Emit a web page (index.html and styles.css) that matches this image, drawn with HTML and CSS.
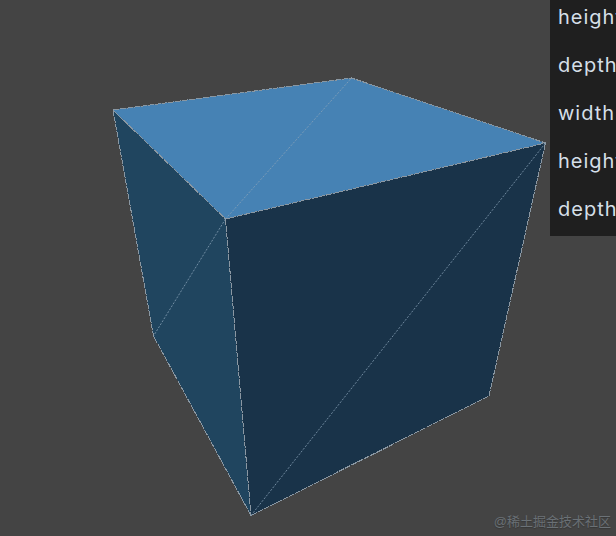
FILE: index.html
```html
<!DOCTYPE html>
<html lang="zh">
<head>
<meta charset="utf-8">
<title>Cube</title>
<link rel="stylesheet" href="styles.css">
</head>
<body>
<svg class="scene" width="616" height="536" viewBox="0 0 616 536">
  <polygon class="face-top" points="113,110 351.5,78 545.5,143 225.5,219"/>
  <polygon class="face-left" points="113,110 225.5,219 251,515.5 153.5,336"/>
  <polygon class="face-right" points="225.5,219 545.5,143 489,396 251,515.5"/>
  <g class="edges">
    <polyline points="113,110 351.5,78 545.5,143 225.5,219 113,110 153.5,336 251,515.5 489,396 545.5,143"/>
    <line x1="225.5" y1="219" x2="251" y2="515.5"/>
  </g>
  <g class="edges-thin">
    <line x1="225.5" y1="219" x2="351.5" y2="78"/>
    <line x1="225.5" y1="219" x2="153.5" y2="336"/>
    <line x1="251" y1="515.5" x2="545.5" y2="143"/>
  </g>
</svg>
<ul class="panel">
  <li class="row">height</li>
  <li class="row">depth</li>
  <li class="row">width</li>
  <li class="row">height</li>
  <li class="row">depth</li>
</ul>
<div class="watermark">@稀土掘金技术社区</div>
</body>
</html>
```
FILE: styles.css
```css
html, body {
  margin: 0;
  height: 100%;
  overflow: hidden;
  background: #444444;
}
.scene {
  display: block;
}
.face-top { fill: #4682b4; }
.face-left { fill: #20455f; }
.face-right { fill: #193349; }
.edges polyline, .edges line {
  fill: none;
  stroke: #8a97a2;
  stroke-width: 1;
  stroke-dasharray: 6 1;
  shape-rendering: crispEdges;
}
.edges-thin line {
  stroke: #8aa3b8;
  stroke-width: 0.9;
  stroke-dasharray: 2 1.5;
  stroke-opacity: 0.85;
}
.panel {
  position: absolute;
  top: 0;
  left: 550px;
  width: 66px;
  height: 236px;
  margin: 0;
  padding: 0 0 0 8px;
  box-sizing: border-box;
  overflow: hidden;
  list-style: none;
  background: #1f1f1f;
  color: #d5dfe8;
  font-family: Inter, "Liberation Sans", sans-serif;
  font-size: 20px;
  letter-spacing: 1px;
  white-space: nowrap;
}
.row {
  height: 48px;
  line-height: 48px;
  position: relative;
  top: -7px;
}
.watermark {
  position: absolute;
  right: 5px;
  bottom: 6px;
  font-family: "Liberation Sans", "Noto Sans CJK SC", sans-serif;
  font-size: 13px;
  line-height: 16px;
  color: rgba(150, 162, 172, 0.5);
  text-shadow: 0 1px 1px rgba(0, 0, 0, 0.2);
}
```
